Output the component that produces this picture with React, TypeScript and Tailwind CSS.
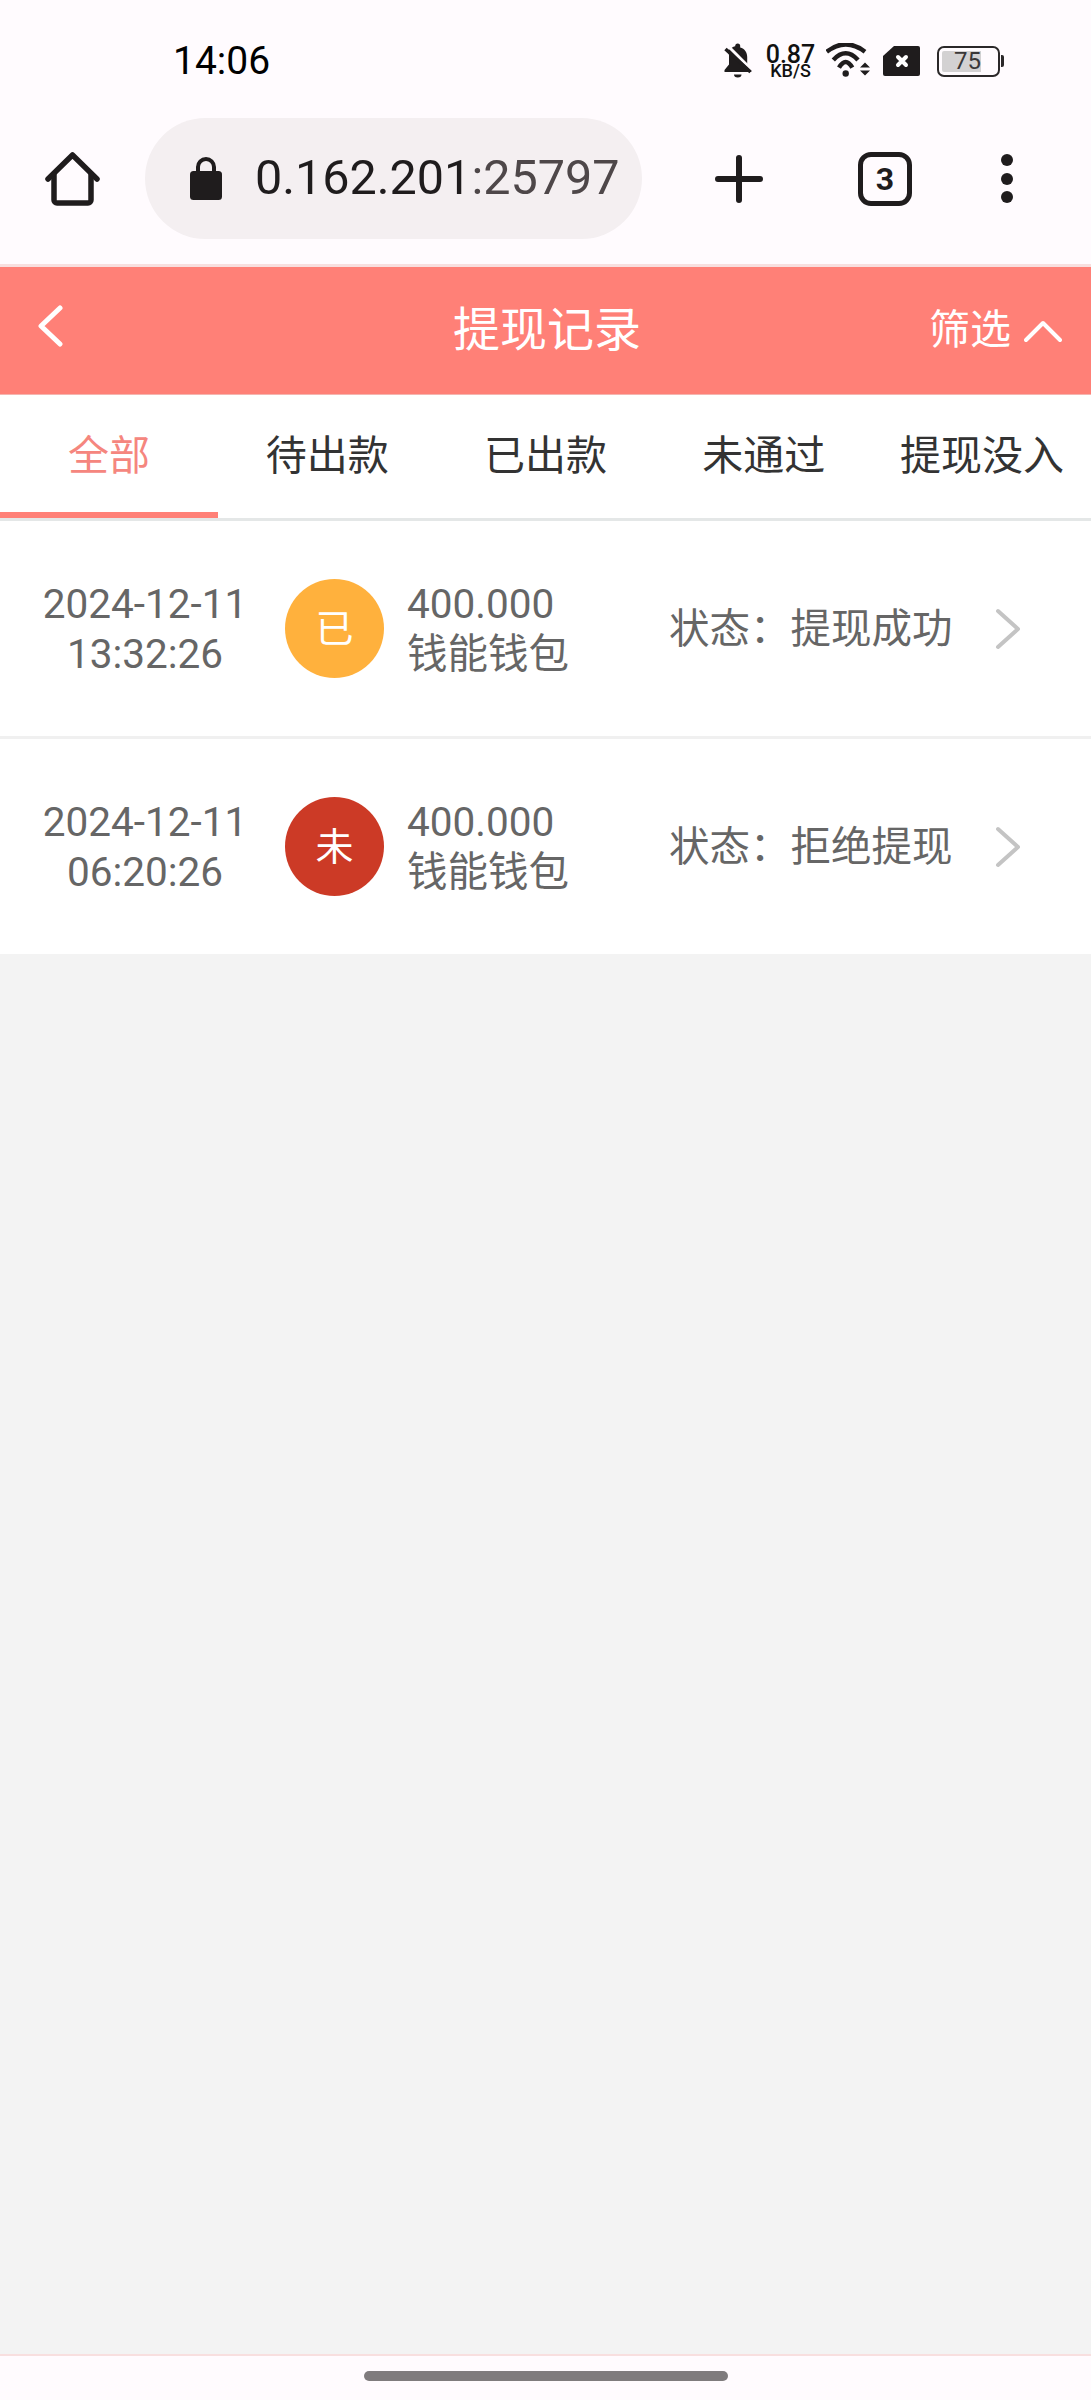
import React from 'react';

const FONT = 'font-[Roboto,"Noto_Sans_CJK_SC",sans-serif]';

const tabs = ['全部', '待出款', '已出款', '未通过', '提现没入'];

const records = [
	{ date: '2024-12-11', time: '13:32:26', badge: '已', color: 'bg-[#ffb13d]', amount: '400.000', wallet: '钱能钱包', status: '提现成功' },
	{ date: '2024-12-11', time: '06:20:26', badge: '未', color: 'bg-[#cc3a26]', amount: '400.000', wallet: '钱能钱包', status: '拒绝提现' },
];

function StatusIcons() {
	return (
		<div className="flex items-center h-[36px]">
			{/* muted bell */}
			<svg className="shrink-0" width="30" height="36" viewBox="0 0 30 36" fill="#1f1c1d">
				<path d="M14.700 0.500a2.500 2.500 0 0 1 2.500 2.500v1.500c4.500 1.200 7 5 7 9.500v7.500l4.500 5.500v2H1.500v-2l4.500-5.500V11.500L4 8l6-4c.8-.4 1.500-.6 2.200-.8V3a2.500 2.500 0 0 1 2.500-2.500z" />
				<path d="M11 31.500h7.500a3.750 3 0 0 1-7.500 0z" />
				<path d="M5 3l26 26" stroke="#fffbfe" strokeWidth="3" />
				<path d="M2.500 6l25 23" stroke="#1f1c1d" strokeWidth="3.500" />
			</svg>
			<div className="ml-[13px] w-[49px] flex flex-col items-center text-[#111]">
				<span className="text-[25px] leading-[19px] font-medium">0.87</span>
				<span className="text-[18px] leading-[14px] font-medium">KB/S</span>
			</div>
			{/* wifi with up/down arrows */}
			<svg className="ml-[11px] shrink-0" width="44" height="36" viewBox="0 0 44 36" fill="none" stroke="#1f1c1d" strokeWidth="4.500">
				<path d="M0.700 8.700Q19.700 -6 39 8.700" />
				<path d="M7.300 17Q19.700 3.600 32 17" />
				<path d="M13 24.700Q19.700 13.300 26.300 24.700" />
				<circle cx="19.700" cy="30.500" r="3.200" fill="#1f1c1d" stroke="none" />
				<path d="M39 19.500l5 5H34zM39 32.500l5-5H34z" fill="#1f1c1d" stroke="none" />
			</svg>
			{/* sim card with a cross */}
			<svg className="ml-[13px] shrink-0" width="37" height="30" viewBox="0 0 37 30">
				<path d="M11 0h24a2 2 0 0 1 2 2v26a2 2 0 0 1-2 2H2a2 2 0 0 1-2-2V10z" fill="#1f1c1d" />
				<path d="M15 11l8 8M23 11l-8 8" stroke="#fff" strokeWidth="4" strokeLinecap="round" />
			</svg>
			{/* battery */}
			<div className="ml-[17px] w-[63px] h-[31px] rounded-[7px] border-[2px] border-[#2b2829] p-[3px] flex">
				<div className="w-[39px] h-full bg-[#d3d1d2] rounded-l-[2px] flex items-center justify-end">
					<span className="text-[#3a3738] text-[24px] leading-none">75</span>
				</div>
			</div>
			<div className="ml-[1px] w-[3px] h-[12px] bg-[#2b2829] rounded-r-[2px]" />
		</div>
	);
}

function BrowserBar() {
	return (
		<div className="h-[159px] flex items-center">
			<svg className="ml-[45px] shrink-0" width="55" height="54" viewBox="0 0 55 54" fill="none" stroke="#1f1c1d" strokeWidth="5.500" strokeLinecap="round" strokeLinejoin="round">
				<path d="M3 27L27.500 3 52 27" />
				<path d="M9 23v25a3 3 0 0 0 3 3h31a3 3 0 0 0 3-3V23" />
			</svg>
			<div className="ml-[45px] shrink-0 w-[497px] h-[121px] rounded-full bg-[#f4eff1] flex items-center pl-[45px] overflow-hidden">
				<svg className="shrink-0" width="32" height="43" viewBox="0 0 32 43">
					<path d="M8 17v-7a8 8 0 0 1 16 0v7" fill="none" stroke="#1f1c1d" strokeWidth="4" />
					<rect x="0" y="14" width="32" height="29" rx="3.500" fill="#1f1c1d" />
				</svg>
				<span className="ml-[33px] text-[48.5px] leading-none text-[#1f1c1d] whitespace-nowrap">
					0.162.201<span className="text-[#4e4749]">:25797</span>
				</span>
			</div>
			<svg className="ml-[73px] shrink-0" width="48" height="48" viewBox="0 0 48 48" stroke="#1f1c1d" strokeWidth="6" strokeLinecap="round">
				<path d="M24 3v42M3 24h42" />
			</svg>
			<div className="ml-[95px] shrink-0 w-[54px] h-[54px] rounded-[13px] border-[5px] border-[#1f1c1d] flex items-center justify-center text-[#1f1c1d] text-[32px] font-bold leading-none">
				3
			</div>
			<div className="ml-[89px] flex flex-col gap-[6.500px]">
				<div className="w-[12px] h-[12px] rounded-full bg-[#1f1c1d]" />
				<div className="w-[12px] h-[12px] rounded-full bg-[#1f1c1d]" />
				<div className="w-[12px] h-[12px] rounded-full bg-[#1f1c1d]" />
			</div>
		</div>
	);
}

function RecordRow({ item, last }: { item: (typeof records)[number]; last: boolean }) {
	return (
		<div className={`flex items-center h-[215px] bg-white box-content ${last ? '' : 'border-b-[3px] border-[#f0f0f0]'}`}>
			<div className="w-[285px] pl-[5px] text-center text-[40.5px] leading-[50px] text-[#666] whitespace-nowrap">
				<div>{item.date}</div>
				<div>{item.time}</div>
			</div>
			<div className={`w-[99px] h-[99px] shrink-0 rounded-full ${item.color} flex items-center justify-center text-white text-[38px] leading-none`}>
				{item.badge}
			</div>
			<div className="ml-[23px] w-[262px] text-[40.5px] leading-[50px] text-[#666]">
				<div>{item.amount}</div>
				<div>{item.wallet}</div>
			</div>
			<div className="w-[326px] text-[40.5px] leading-[50px] text-[#666] whitespace-nowrap">状态：{item.status}</div>
			<svg className="shrink-0" width="26" height="42" viewBox="0 0 26 42" fill="none" stroke="#c4c4c4" strokeWidth="4" strokeLinecap="round" strokeLinejoin="round">
				<path d="M3 3l20 18L3 39" />
			</svg>
		</div>
	);
}

function App() {
	return (
		<div className={`${FONT} w-[1091px] h-[2400px] flex flex-col bg-[#f3f3f3]`}>
			<div className="bg-[#fffbfe] h-[264px] flex flex-col">
				<div className="h-[99px] flex items-start justify-between pt-[43px] pl-[173px] pr-[87px]">
					<div className="text-[39px] leading-[36px] text-black">14:06</div>
					<StatusIcons />
				</div>
				<BrowserBar />
			</div>
			<div className="h-[3px] bg-[#f8dfdf]" />

			<div className="h-[127px] border-b-[1px] border-[#f5b5b0] bg-[#ff8077] flex items-center text-white box-content">
				<div className="flex-1 pl-[37px] pb-[10px]">
					<svg width="26" height="42" viewBox="0 0 26 42" fill="none" stroke="#fff" strokeWidth="5" strokeLinecap="round" strokeLinejoin="round">
						<path d="M23 3L4 21l19 18" />
					</svg>
				</div>
				<div className="text-[47px] leading-none pb-[3px] pr-[5px]">提现记录</div>
				<div className="flex-1 flex items-center justify-end pr-[29px]">
					<span className="text-[41px] leading-none">筛选</span>
					<svg className="ml-[13px] shrink-0" width="38" height="24" viewBox="0 0 38 24" fill="none" stroke="#fff" strokeWidth="4" strokeLinecap="round" strokeLinejoin="round">
						<path d="M2 21L19 4l17 17" />
					</svg>
				</div>
			</div>

			<div className="h-[123px] bg-white flex border-b-[3px] border-[#e4e7e7] box-content">
				{tabs.map((tab, i) => (
					<div
						key={tab}
						className={`flex-1 flex items-center justify-center pt-[5px] text-[41px] leading-none whitespace-nowrap ${
							i === 0 ? 'text-[#f5867e] border-b-[6px] border-[#ff8077]' : 'text-[#333] border-b-[6px] border-transparent'
						}`}
					>
						{tab}
					</div>
				))}
			</div>

			{records.map((item, i) => (
				<RecordRow key={item.time} item={item} last={i === records.length - 1} />
			))}

			<div className="flex-1" />
			<div className="h-[2px] bg-[#f8dfdf]" />
			<div className="h-[44px] bg-[#fffbfe] flex justify-center pt-[15px]">
				<div className="w-[364px] h-[10px] rounded-full bg-[#7f7b7d]" />
			</div>
		</div>
	);
}

export default App;
